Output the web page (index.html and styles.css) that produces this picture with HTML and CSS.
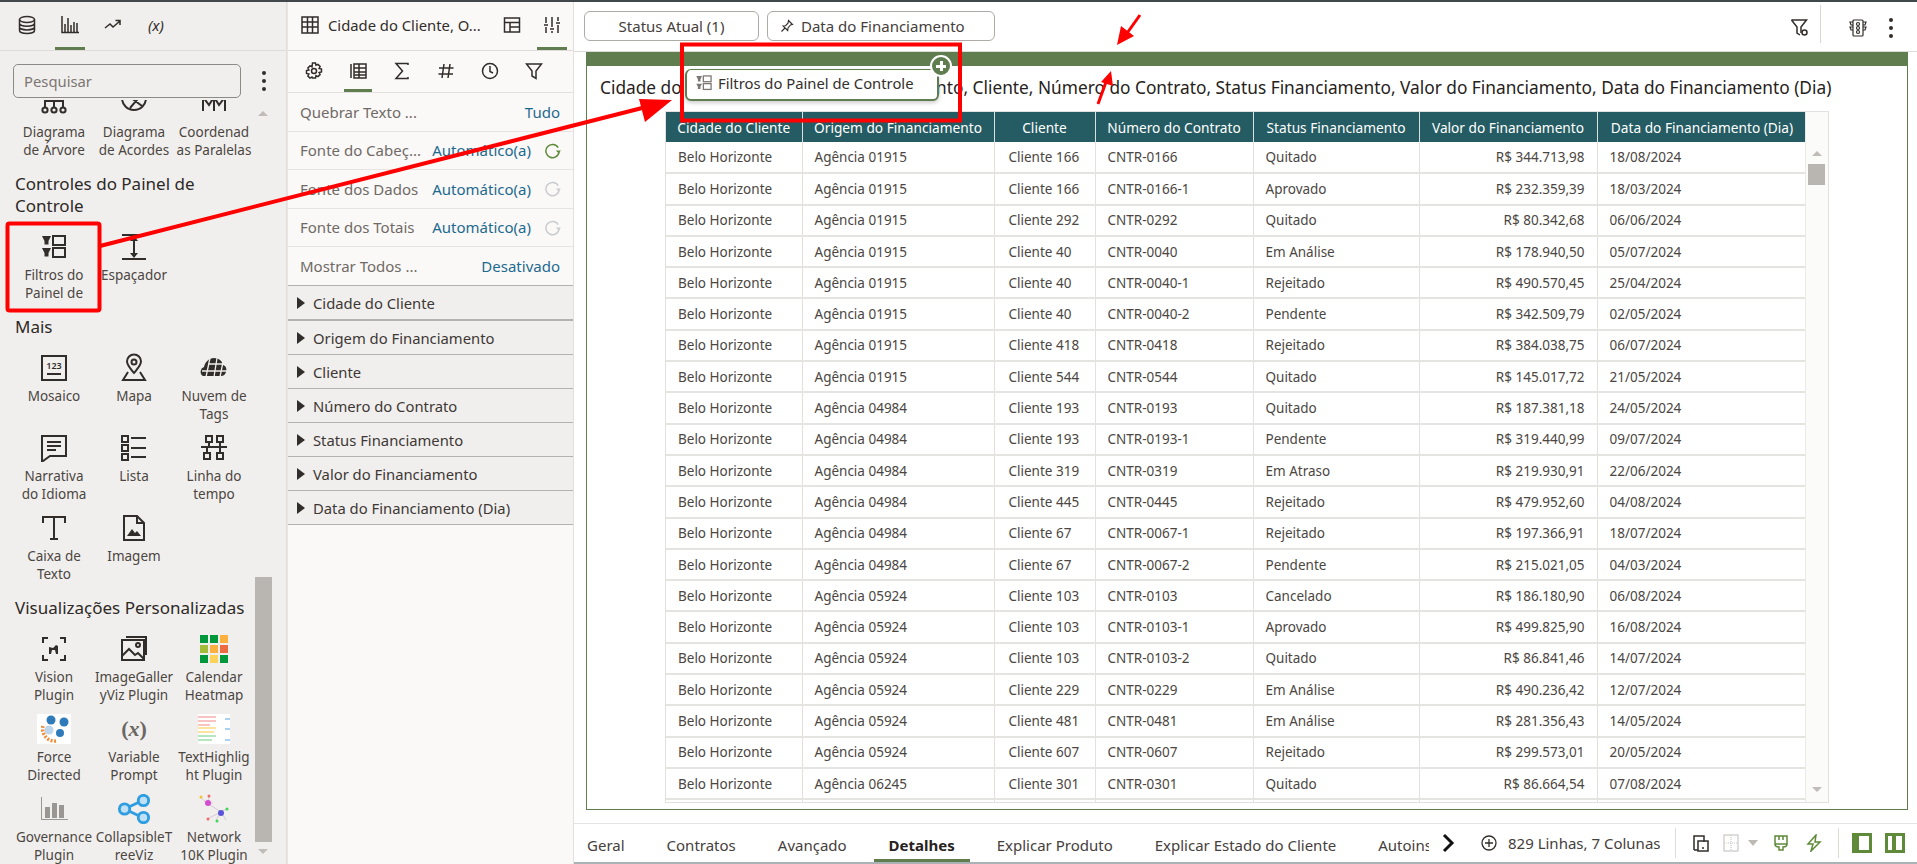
FILE: index.html
```html
<!DOCTYPE html>
<html lang="pt">
<head>
<meta charset="utf-8">
<title>Detalhes</title>
<link rel="stylesheet" href="styles.css">
</head>
<body>
<div class="topstrip"></div>
<div class="app">
  <aside class="palette">
    <nav class="ptabs">
      <span class="ptab"><svg class="ic20" viewBox="0 0 20 20"><ellipse cx="10" cy="4.5" rx="7.5" ry="3"/><path d="M2.5 4.500v11c0 1.700 3.400 3 7.500 3s7.500-1.300 7.500-3v-11M2.500 8.200c0 1.700 3.400 3 7.500 3s7.500-1.300 7.500-3M2.500 11.900c0 1.700 3.400 3 7.500 3s7.500-1.300 7.500-3"/></svg></span>
      <span class="ptab active"><svg class="ic20" viewBox="0 0 20 20"><path d="M2 1v16.500h17M5 17V9M8 17V3M11 17V10M14 17V7M17 17V8"/></svg></span>
      <span class="ptab"><svg class="ic20" viewBox="0 0 20 20"><path d="M2 13l5-4 3 3 7-6M12.500 5.500H17V10"/></svg></span>
      <span class="ptab ptab-x">(x)</span>
    </nav>
    <div class="searchrow">
      <div class="search">Pesquisar</div>
      <span class="kebab"><i></i><i></i><i></i></span>
    </div>
    <div class="scroller">
      <div class="tiles tiles-first">
        <div class="tile"><svg class="ic28" viewBox="0 0 28 28"><path d="M14 2v7M5 17v-6h18v6M14 9v8"/><circle cx="5" cy="20" r="2.600"/><circle cx="14" cy="20" r="2.600"/><circle cx="23" cy="20" r="2.600"/></svg><span>Diagrama<br>de Árvore</span></div>
        <div class="tile"><svg class="ic28" viewBox="0 0 28 28"><path d="M2 8a12 12 0 0 0 24 0M6 4l16 12M22 4L10 18"/></svg><span>Diagrama<br>de Acordes</span></div>
        <div class="tile"><svg class="ic28" viewBox="0 0 28 28"><path d="M3 2v19M25 2v19M14 2v19M3 7l6 8 5-8 5 8 6-8"/></svg><span>Coordenad<br>as Paralelas</span></div>
      </div>
      <h3>Controles do Painel de<br>Controle</h3>
      <div class="tiles tiles-ctrl">
        <div class="tile"><svg class="ic28" viewBox="0 0 28 28"><path class="fill" d="M2 3h9L8.500 8v3.500h-4V8zM2 15h9l-2.500 5v3.500h-4V20z"/><rect x="13" y="3" width="12" height="9"/><rect x="13" y="15" width="12" height="9"/></svg><span>Filtros do<br>Painel de</span></div>
        <div class="tile"><svg class="ic28" viewBox="0 0 28 28"><path d="M2 2h24M2 26h24M14 6v16"/><path class="fill" d="M14 3l4 5h-8zM14 25l4-5h-8z"/></svg><span>Espaçador</span></div>
      </div>
      <h3>Mais</h3>
      <div class="tiles">
        <div class="tile"><svg class="ic28" viewBox="0 0 28 28"><rect x="2" y="2" width="24" height="24"/><path d="M7 20h14"/><text x="14" y="15" class="mini">123</text></svg><span>Mosaico</span></div>
        <div class="tile"><svg class="ic28" viewBox="0 0 28 28"><path d="M14 19c-4-5-7-8-7-11.500a7 7 0 0 1 14 0C21 11 18 14 14 19zM8 18l-5 8h22l-5-8"/><circle cx="14" cy="8" r="2.500"/></svg><span>Mapa</span></div>
        <div class="tile"><svg class="ic28" viewBox="0 0 28 28"><path class="fill" d="M3 22a5 5 0 0 1 1-9c1-5 5-9 10-9 5 0 8 3 9 7 3 1 4 4 3 7-1 3-3 4-5 4z"/><path class="white" d="M2 17h25M8 10h18M10 4l-4 19M17 4l-3 19M23 8l-3 15"/></svg><span>Nuvem de<br>Tags</span></div>
        <div class="tile"><svg class="ic28" viewBox="0 0 28 28"><path d="M2 2h24v20H10l-7 5-1 0zM7 8h14M7 12h14M7 16h9"/></svg><span>Narrativa<br>do Idioma</span></div>
        <div class="tile"><svg class="ic28" viewBox="0 0 28 28"><rect x="2" y="2" width="6" height="6"/><rect x="2" y="11" width="6" height="6"/><rect x="2" y="20" width="6" height="6"/><path d="M11 4h15M11 14h15M11 23h15"/></svg><span>Lista</span></div>
        <div class="tile"><svg class="ic28" viewBox="0 0 28 28"><rect x="6" y="2" width="6" height="6"/><rect x="17" y="2" width="6" height="6"/><rect x="4" y="19" width="6" height="6"/><rect x="17" y="19" width="6" height="6"/><path d="M9 8v5M20 8v5M1 13h26M7 13v6M20 13v6"/></svg><span>Linha do<br>tempo</span></div>
        <div class="tile"><svg class="ic28" viewBox="0 0 28 28"><path d="M14 3v22M10 25h8M3 9V3h22v6"/></svg><span>Caixa de<br>Texto</span></div>
        <div class="tile"><svg class="ic28" viewBox="0 0 28 28"><path d="M4 2h13l7 7v17H4zM17 2v7h7"/><path class="fill" d="M7 22l5-7 3 4 2-2 4 5z"/></svg><span>Imagem</span></div>
      </div>
      <h3>Visualizações Personalizadas</h3>
      <div class="tiles">
        <div class="tile"><svg class="ic28" viewBox="0 0 28 28"><path d="M8 3H3v5M20 3h5v5M8 25H3v-5M20 25h5v-5"/><path class="fill" d="M9 12l4 1 3-3 2 1v8h-2l-1-4h-3l-1 4H9z"/></svg><span>Vision<br>Plugin</span></div>
        <div class="tile"><svg class="ic28" viewBox="0 0 28 28"><path class="thin" d="M6 2h20v18"/><rect class="thin" x="2" y="5" width="22" height="20"/><path class="thin" d="M2 21l7-7 6 6 3-2 6 6"/><circle class="thin" cx="18" cy="10" r="2"/></svg><span>ImageGaller<br>yViz Plugin</span></div>
        <div class="tile"><svg class="ic28 plain" viewBox="0 0 28 28"><rect class="g1" width="8" height="8"/><rect class="g1" x="10" width="8" height="8"/><rect class="c2" x="20" width="8" height="8"/><rect class="c3" y="10" width="8" height="8"/><rect class="c2" x="10" y="10" width="8" height="8"/><rect class="c4" x="20" y="10" width="8" height="8"/><rect class="g1" y="20" width="8" height="8"/><rect class="c5" x="10" y="20" width="8" height="8"/><rect class="g1" x="20" y="20" width="8" height="8"/></svg><span>Calendar<br>Heatmap</span></div>
        <div class="tile"><svg class="ic34 plain" viewBox="0 0 34 30"><rect class="w" width="34" height="30"/><circle class="b1" cx="14" cy="6" r="4.500"/><circle class="b1" cx="27" cy="8" r="4.500"/><circle class="b1" cx="23" cy="19" r="4"/><circle class="b2" cx="12" cy="16" r="4.500"/><path class="o1" d="M6 12a12 12 0 0 0 2 10 12 12 0 0 0 11 5"/></svg><span>Force<br>Directed</span></div>
        <div class="tile"><b class="var">(<i>x</i>)</b><span>Variable<br>Prompt</span></div>
        <div class="tile"><svg class="ic34 plain" viewBox="0 0 32 30"><rect class="w" width="32" height="30"/><rect class="pk" y="2" width="18" height="2"/><rect class="pk" y="6" width="18" height="2"/><rect class="pk" y="10" width="12" height="2"/><rect class="ye" y="13" width="18" height="2"/><rect class="ye" y="17" width="16" height="2"/><rect class="gr" y="21" width="18" height="2"/><rect class="gr" y="25" width="14" height="2"/><rect class="bl" x="27" y="4" width="5" height="2"/><rect class="bl" x="27" y="14" width="5" height="2"/><rect class="bl" x="27" y="25" width="5" height="2"/></svg><span>TextHighlig<br>ht Plugin</span></div>
        <div class="tile"><svg class="ic28 plain" viewBox="0 0 28 28"><path class="gy" d="M1 2v23h27v-1H2V2zM5 12h5v11H5zM12 8h5v15h-5zM19 10h5v13h-5z"/></svg><span>Governance<br>Plugin</span></div>
        <div class="tile"><svg class="ic34 plain" viewBox="0 0 36 30"><path class="bs" d="M8 15L27 6M8 15l19 9"/><circle class="bc" cx="8" cy="15" r="5.500"/><circle class="bc" cx="28" cy="6" r="5.500"/><circle class="bc" cx="28" cy="24" r="5.500"/></svg><span>CollapsibleT<br>reeViz</span></div>
        <div class="tile"><svg class="ic34 plain" viewBox="0 0 30 30"><path class="nl" d="M8 9l14 9M8 9l2-6M8 9L1 3M8 9l6 0M22 18l7-4M22 18l5 8M22 18l-5 8M22 18l-14 7"/><circle class="nm" cx="9" cy="9" r="3"/><circle class="nb" cx="22" cy="19" r="3"/><circle class="ny" cx="2" cy="3" r="1.500"/><circle class="nr" cx="10" cy="2" r="1.500"/><circle class="ng" cx="28" cy="15" r="1.500"/><circle class="ng" cx="18" cy="27" r="1.500"/><circle class="nr" cx="9" cy="25" r="1.500"/></svg><span>Network<br>10K Plugin</span></div>
      </div>
      <span class="sb-up"></span>
      <span class="sb-thumb"></span>
      <span class="sb-down"></span>
    </div>
  </aside>

  <section class="props">
    <header class="props-head">
      <svg class="ic18" viewBox="0 0 18 18"><rect x="1" y="1" width="16" height="16"/><path d="M1 6h16M1 11h16M6.500 1v16M11.500 1v16"/></svg>
      <span class="props-title">Cidade do Cliente, O...</span>
      <svg class="ic18 hd-a" viewBox="0 0 18 18"><rect x="1.500" y="2" width="15" height="14"/><path d="M1.500 6.500h15M7 6.500V16M7 11h9.500"/></svg>
      <span class="hd-b"><svg class="ic18" viewBox="0 0 18 18"><path d="M3 1v6M3 11v6M9 1v10M9 15v2M15 1v4M15 9v8M1 9h4M7 13h4M13 7h4"/></svg></span>
    </header>
    <nav class="subtabs">
      <svg class="ic18" viewBox="0 0 18 18"><circle cx="9" cy="9" r="2.500"/><path d="M7.500 1h3l.5 2.300 2-.9 2.100 2.100-1 2 2.400.5v3l-2.400.5 1 2-2.100 2.100-2-1-.5 2.400h-3L7 15.100l-2 1-2.100-2.100 1-2L1.500 11.500v-3l2.400-.5-1-2L5 3.900l2 .9z"/></svg>
      <span class="sub-active"><svg class="ic18" viewBox="0 0 18 18"><path d="M2 2v14M5 2h12v14H5zM5 6h12M5 10h12M5 13h12M10 2v14"/></svg></span>
      <svg class="ic18" viewBox="0 0 18 18"><path d="M15 3V1.500H3L9.500 9 3 16.500h12V15"/></svg>
      <svg class="ic18" viewBox="0 0 18 18"><path d="M7 2L5 16M13 2l-2 14M2 6h14.500M1.500 12H16"/></svg>
      <svg class="ic18" viewBox="0 0 18 18"><circle cx="9" cy="9" r="7.500"/><path d="M9 4v5.500l3 1.500"/></svg>
      <svg class="ic18" viewBox="0 0 18 18"><path d="M1.500 2h15L11 9v7.500L7 14V9z"/></svg>
    </nav>
    <div class="prop"><span class="k">Quebrar Texto ...</span><span class="v">Tudo</span></div>
    <div class="prop"><span class="k">Fonte do Cabeç...</span><span class="v v-auto">Automático(a)</span><svg class="reset on" viewBox="0 0 18 18"><path d="M15 6A7 7 0 1 0 16 10"/><path class="tip" d="M12.500 9h5.500l-2.700 3z"/></svg></div>
    <div class="prop"><span class="k">Fonte dos Dados</span><span class="v v-auto">Automático(a)</span><svg class="reset" viewBox="0 0 18 18"><path d="M15 6A7 7 0 1 0 16 10"/><path class="tip" d="M12.500 9h5.500l-2.700 3z"/></svg></div>
    <div class="prop"><span class="k">Fonte dos Totais</span><span class="v v-auto">Automático(a)</span><svg class="reset" viewBox="0 0 18 18"><path d="M15 6A7 7 0 1 0 16 10"/><path class="tip" d="M12.500 9h5.500l-2.700 3z"/></svg></div>
    <div class="prop prop-last"><span class="k">Mostrar Todos ...</span><span class="v">Desativado</span></div>
    <div class="acc acc-first">Cidade do Cliente</div>
    <div class="acc">Origem do Financiamento</div>
    <div class="acc">Cliente</div>
    <div class="acc">Número do Contrato</div>
    <div class="acc">Status Financiamento</div>
    <div class="acc">Valor do Financiamento</div>
    <div class="acc">Data do Financiamento (Dia)</div>
  </section>

  <main class="main">
    <div class="filterbar">
      <button class="pill pill-a">Status Atual (1)</button>
      <button class="pill pill-b"><svg class="ic14" viewBox="0 0 14 14"><path d="M8.500 1.500l4 4-2 .5-2.500 3-.3 2.500L3 7l2.500-.3 2.500-2.500zM5 9l-3.500 3.500"/></svg>Data do Financiamento</button>
      <svg class="ic20 fb-filter" viewBox="0 0 20 20"><path d="M1.500 2h15L11 9v6"/><path d="M1.500 2L7 9v6l3 2"/><circle cx="14.500" cy="14.500" r="2.500"/></svg>
      <span class="fb-sep"></span>
      <svg class="ic20 fb-light" viewBox="0 0 20 20"><rect x="5" y="2" width="10" height="16" rx="1"/><circle cx="10" cy="6" r="1.500"/><circle cx="10" cy="10" r="1.500"/><circle cx="10" cy="14" r="1.500"/><path d="M5 4H2l1 3h2M15 4h3l-1 3h-2M5 9H2l1 3h2M15 9h3l-1 3h-2"/></svg>
      <span class="kebab kebab-fb"><i></i><i></i><i></i></span>
    </div>
    <div class="canvas">
      <div class="frame">
        <h2 class="viz-title">Cidade do Cliente, Origem do Financiamento, Cliente, Número do Contrato, Status Financiamento, Valor do Financiamento, Data do Financiamento (Dia)</h2>
        <div class="gridwrap">
          <table class="grid">
            <colgroup><col class="c1"><col class="c2w"><col class="c3w"><col class="c4w"><col class="c5w"><col class="c6w"><col class="c7w"></colgroup>
            <thead><tr><th>Cidade do Cliente</th><th>Origem do Financiamento</th><th>Cliente</th><th>Número do Contrato</th><th>Status Financiamento</th><th>Valor do Financiamento</th><th>Data do Financiamento (Dia)</th></tr></thead>
            <tbody>
              <tr><td>Belo Horizonte</td><td>Agência 01915</td><td>Cliente 166</td><td>CNTR-0166</td><td>Quitado</td><td class="num">R$ 344.713,98</td><td>18/08/2024</td></tr>
              <tr><td>Belo Horizonte</td><td>Agência 01915</td><td>Cliente 166</td><td>CNTR-0166-1</td><td>Aprovado</td><td class="num">R$ 232.359,39</td><td>18/03/2024</td></tr>
              <tr><td>Belo Horizonte</td><td>Agência 01915</td><td>Cliente 292</td><td>CNTR-0292</td><td>Quitado</td><td class="num">R$ 80.342,68</td><td>06/06/2024</td></tr>
              <tr><td>Belo Horizonte</td><td>Agência 01915</td><td>Cliente 40</td><td>CNTR-0040</td><td>Em Análise</td><td class="num">R$ 178.940,50</td><td>05/07/2024</td></tr>
              <tr><td>Belo Horizonte</td><td>Agência 01915</td><td>Cliente 40</td><td>CNTR-0040-1</td><td>Rejeitado</td><td class="num">R$ 490.570,45</td><td>25/04/2024</td></tr>
              <tr><td>Belo Horizonte</td><td>Agência 01915</td><td>Cliente 40</td><td>CNTR-0040-2</td><td>Pendente</td><td class="num">R$ 342.509,79</td><td>02/05/2024</td></tr>
              <tr><td>Belo Horizonte</td><td>Agência 01915</td><td>Cliente 418</td><td>CNTR-0418</td><td>Rejeitado</td><td class="num">R$ 384.038,75</td><td>06/07/2024</td></tr>
              <tr><td>Belo Horizonte</td><td>Agência 01915</td><td>Cliente 544</td><td>CNTR-0544</td><td>Quitado</td><td class="num">R$ 145.017,72</td><td>21/05/2024</td></tr>
              <tr><td>Belo Horizonte</td><td>Agência 04984</td><td>Cliente 193</td><td>CNTR-0193</td><td>Quitado</td><td class="num">R$ 187.381,18</td><td>24/05/2024</td></tr>
              <tr><td>Belo Horizonte</td><td>Agência 04984</td><td>Cliente 193</td><td>CNTR-0193-1</td><td>Pendente</td><td class="num">R$ 319.440,99</td><td>09/07/2024</td></tr>
              <tr><td>Belo Horizonte</td><td>Agência 04984</td><td>Cliente 319</td><td>CNTR-0319</td><td>Em Atraso</td><td class="num">R$ 219.930,91</td><td>22/06/2024</td></tr>
              <tr><td>Belo Horizonte</td><td>Agência 04984</td><td>Cliente 445</td><td>CNTR-0445</td><td>Rejeitado</td><td class="num">R$ 479.952,60</td><td>04/08/2024</td></tr>
              <tr><td>Belo Horizonte</td><td>Agência 04984</td><td>Cliente 67</td><td>CNTR-0067-1</td><td>Rejeitado</td><td class="num">R$ 197.366,91</td><td>18/07/2024</td></tr>
              <tr><td>Belo Horizonte</td><td>Agência 04984</td><td>Cliente 67</td><td>CNTR-0067-2</td><td>Pendente</td><td class="num">R$ 215.021,05</td><td>04/03/2024</td></tr>
              <tr><td>Belo Horizonte</td><td>Agência 05924</td><td>Cliente 103</td><td>CNTR-0103</td><td>Cancelado</td><td class="num">R$ 186.180,90</td><td>06/08/2024</td></tr>
              <tr><td>Belo Horizonte</td><td>Agência 05924</td><td>Cliente 103</td><td>CNTR-0103-1</td><td>Aprovado</td><td class="num">R$ 499.825,90</td><td>16/08/2024</td></tr>
              <tr><td>Belo Horizonte</td><td>Agência 05924</td><td>Cliente 103</td><td>CNTR-0103-2</td><td>Quitado</td><td class="num">R$ 86.841,46</td><td>14/07/2024</td></tr>
              <tr><td>Belo Horizonte</td><td>Agência 05924</td><td>Cliente 229</td><td>CNTR-0229</td><td>Em Análise</td><td class="num">R$ 490.236,42</td><td>12/07/2024</td></tr>
              <tr><td>Belo Horizonte</td><td>Agência 05924</td><td>Cliente 481</td><td>CNTR-0481</td><td>Em Análise</td><td class="num">R$ 281.356,43</td><td>14/05/2024</td></tr>
              <tr><td>Belo Horizonte</td><td>Agência 05924</td><td>Cliente 607</td><td>CNTR-0607</td><td>Rejeitado</td><td class="num">R$ 299.573,01</td><td>20/05/2024</td></tr>
              <tr><td>Belo Horizonte</td><td>Agência 06245</td><td>Cliente 301</td><td>CNTR-0301</td><td>Quitado</td><td class="num">R$ 86.664,54</td><td>07/08/2024</td></tr>
              <tr class="stub"><td></td><td></td><td></td><td></td><td></td><td></td><td></td></tr>
            </tbody>
          </table>
          <div class="vscroll"><span class="sb-up2"></span><span class="thumb2"></span><span class="sb-down2"></span></div>
        </div>
      </div>
    </div>
    <footer class="tabsbar">
      <div class="tablist">
        <span class="tab">Geral</span>
        <span class="tab">Contratos</span>
        <span class="tab">Avançado</span>
        <span class="tab t-det">Detalhes</span>
        <span class="tab">Explicar Produto</span>
        <span class="tab">Explicar Estado do Cliente</span>
        <span class="tab t-auto">Autoins</span>
      </div>
      <svg class="chev" viewBox="0 0 14 20"><path d="M3 2l8 8-8 8"/></svg>
      <svg class="ic16 addtab" viewBox="0 0 16 16"><circle cx="8" cy="8" r="7"/><path d="M8 4v8M4 8h8"/></svg>
      <span class="rowcount">829 Linhas, 7 Colunas</span>
      <span class="tb-sep"></span>
      <svg class="ic18" viewBox="0 0 18 18"><path d="M2 16V2h10v6"/><path d="M2 16h4"/><rect x="6" y="7" width="10" height="10"/><path d="M10 14h2"/></svg>
      <svg class="ic18 faded" viewBox="0 0 18 18"><rect x="2" y="1" width="14" height="16"/><path class="dots" d="M9 1v16M2 9h14"/></svg>
      <span class="caret"></span>
      <svg class="ic18 gr" viewBox="0 0 18 18"><path d="M3 2h12v8H3zM3 10c0 2 2 3 4 3v3h4v-3c2 0 4-1 4-3M7 2v4M11 2v4"/></svg>
      <svg class="ic18 gr bolt" viewBox="0 0 18 18"><path d="M11 1L3 10h5l-2 7 9-9h-5z"/></svg>
      <span class="tb-sep tb-sep2"></span>
      <span class="panel-btn pb-l"></span>
      <span class="panel-btn pb-r"></span>
    </footer>
  </main>
</div>

<div class="dragcard">
  <svg class="ic18 dimmed" viewBox="0 0 28 28"><path class="fill" d="M2 3h9L8.500 8v3.500h-4V8zM2 15h9l-2.500 5v3.500h-4V20z"/><rect x="13" y="3" width="12" height="9"/><rect x="13" y="15" width="12" height="9"/></svg>
  Filtros do Painel de Controle
  <span class="dragplus"></span>
</div>

<svg class="annot" viewBox="0 0 1917 864">
  <rect x="7.500" y="223.500" width="92" height="87" rx="2"/>
  <rect x="682" y="44.500" width="278" height="76"/>
  <path d="M100 246L650 106"/>
  <path class="head" d="M672 100L645 122 639 99z"/>
  <path class="tin" d="M1140 15L1125 36"/>
  <path class="head" d="M1117 45L1121 26 1134 36z"/>
  <path class="tin" d="M1098 104L1106 82"/>
  <path class="head" d="M1111 71L1113 86 1101 82z"/>
</svg>
</body>
</html>
```
FILE: styles.css
```css
* { box-sizing: border-box; }
html, body { margin: 0; height: 100%; }
body { width: 1917px; height: 864px; overflow: hidden; position: relative; font-family: "Noto Sans", "Open Sans", sans-serif; color: #3b3633; background: #fff; }
svg { fill: none; stroke: #312d2a; stroke-width: 1.6; display: block; flex: none; }
svg .fill { fill: #312d2a; stroke: none; }
svg .white { stroke: #f1efed; stroke-width: 1.3; fill: none; }
svg.plain { stroke: none; }
.ic14 { width: 14px; height: 14px; stroke-width: 1.1; }
.ic16 { width: 16px; height: 16px; }
.ic18 { width: 18px; height: 18px; stroke-width: 1.5; }
.ic20 { width: 20px; height: 20px; stroke-width: 1.5; }
.ic28 { width: 28px; height: 28px; stroke-width: 2; }
.ic34 { width: 34px; height: 30px; }

.topstrip { height: 2px; background: #41484b; }
.app { display: flex; height: 862px; }

/* Palette */
.palette { width: 287px; flex: none; background: #f1efed; border-right: 1px solid #e2dfdc; display: flex; flex-direction: column; }
.ptabs { height: 49px; display: flex; padding-left: 12px; gap: 13px; border-bottom: 1px solid #dedbd8; flex: none; }
.ptab { width: 30px; height: 48px; display: flex; align-items: center; justify-content: center; padding-bottom: 3px; }
.ptab.active { box-shadow: inset 0 -3px 0 #5f7d4f; }
.ptab-x { font-style: italic; font-size: 15px; color: #312d2a; }
.searchrow { height: 49px; display: flex; align-items: flex-start; padding: 13px 0 0 13px; flex: none; }
.search { width: 228px; height: 34px; border: 1px solid #8d8985; border-radius: 5px; background: #f1efed; font-size: 14.800px; color: #7b7672; line-height: 32px; padding-left: 10px; }
.kebab { display: flex; flex-direction: column; gap: 4px; margin: 7px 0 0 21px; }
.kebab i { width: 4px; height: 4px; border-radius: 50%; background: #312d2a; display: block; }
.scroller { position: relative; flex: 1; overflow: hidden; padding-left: 14px; width: 286px; }
.scroller h3 { margin: 0 0 0 1px; padding: 10px 0 9px; font-size: 17px; line-height: 22px; font-weight: 400; color: #2d2926; white-space: nowrap; }
.tiles { display: grid; grid-template-columns: repeat(3, 80px); grid-auto-rows: 80px; }
.tiles-first { margin-top: -17px; }
.tile { display: flex; flex-direction: column; align-items: center; padding-top: 6px; font-size: 13.500px; line-height: 17.500px; color: #4b4642; text-align: center; }
.tile > svg, .tile > .var { height: 30px; margin-bottom: 4px; }
.tile > span { display: block; margin-top: 1px; white-space: nowrap; }
.var { font-family: "Liberation Serif", serif; font-size: 22px; font-weight: 700; line-height: 30px; color: #6b6763; }
.sb-up, .sb-down, .sb-up2, .sb-down2 { position: absolute; width: 0; height: 0; border-left: 5px solid transparent; border-right: 5px solid transparent; }
.sb-up { top: 11px; left: 258px; border-bottom: 5px solid #c1bcb7; }
.sb-down { bottom: 10px; left: 258px; border-top: 5px solid #c1bcb7; }
.sb-thumb { position: absolute; top: 477px; left: 255px; width: 17px; height: 265px; background: #b9b5b1; }
.g1 { fill: #00983a; } .c2 { fill: #fbb040; } .c3 { fill: #a3bc37; } .c4 { fill: #ee6a43; } .c5 { fill: #fdd25a; }
.w { fill: #fff; } .b1 { fill: #2f7ab9; } .b2 { fill: #bcd6ee; }
.o1 { stroke: #f18d3c; stroke-width: 3.500; stroke-dasharray: 2 1.500; fill: none; }
.pk { fill: #f8c3c3; } .ye { fill: #fde3a0; } .gr { fill: #b6e6bf; } .bl { fill: #a9d2f2; }
.gy { fill: #9a9693; }
.bs { stroke: #2f9ee0; stroke-width: 3; }
.bc { fill: #bfe0f7; stroke: #2f9ee0; stroke-width: 3; }
.nl { stroke: #d4c9d6; stroke-width: 1; }
.nm { fill: #d64ccf; } .nb { fill: #5a55d8; } .ny { fill: #f1c232; } .nr { fill: #ef6a6a; } .ng { fill: #3ed65a; }
.mini { font-family: "Noto Sans", sans-serif; font-size: 9px; fill: #312d2a; stroke: none; text-anchor: middle; font-weight: 600; }

/* Props */
.props { width: 287px; flex: none; background: #fbf9f8; border-right: 1px solid #e2dfdc; border-left: 1px solid #e8e6e3; }
.props-head { height: 49px; display: flex; align-items: center; padding: 0 0 3px 13px; border-bottom: 1px solid #dedbd8; font-size: 14.800px; color: #312d2a; position: relative; }
.props-title { margin-left: 9px; width: 175px; white-space: nowrap; }
.hd-b { position: absolute; left: 249px; top: 0; width: 30px; height: 48px; display: flex; align-items: center; justify-content: center; padding-bottom: 3px; box-shadow: inset 0 -3px 0 #5f7d4f; }
.subtabs { height: 42px; display: flex; align-items: center; padding: 0 0 2px 17px; gap: 26px; border-bottom: 1px solid #e2dfdc; position: relative; }
.sub-active { position: relative; height: 41px; display: flex; align-items: center; }
.sub-active::after { content: ""; position: absolute; left: -5px; right: -5px; bottom: -1px; height: 3px; background: #5f7d4f; }
.prop { height: 38.500px; border-bottom: 1px solid #e6e3e0; display: flex; align-items: center; padding: 0 13px 0 12px; font-size: 15px; white-space: nowrap; }
.prop .k { color: #6f6a66; flex: 1; }
.prop .v { color: #1d6a8f; }
.prop .v-auto { margin-right: 13px; }
.prop-last { border-bottom: 1px solid #b5b1ad; }
.reset { width: 17px; height: 17px; stroke: #c9cccf; stroke-width: 1.600; margin-right: -1px; }
.reset .tip { fill: #c9cccf; stroke: none; }
.reset.on { stroke: #5f8a3a; }
.reset.on .tip { fill: #5f8a3a; }
.acc { height: 34px; background: #f1efed; border-bottom: 1px solid #b5b1ad; font-size: 14.800px; line-height: 34px; color: #3d3835; padding-left: 25px; position: relative; }
.acc::before { content: ""; position: absolute; left: 9px; top: 11px; border-left: 8px solid #312d2a; border-top: 6px solid transparent; border-bottom: 6px solid transparent; }
.acc-first { height: 35px; border-bottom-width: 2px; }

/* Main */
.main { flex: 1; min-width: 0; display: flex; flex-direction: column; }
.filterbar { height: 50px; flex: none; display: flex; align-items: flex-start; padding: 9px 0 0 10px; border-bottom: 1px solid #dedbd8; position: relative; }
.pill { height: 30px; border: 1px solid #aeaaa6; border-radius: 6px; background: #fff; font: 15px "Noto Sans", sans-serif; color: #45403c; display: flex; align-items: center; justify-content: center; padding: 0; }
.pill-a { width: 175px; }
.pill-b { width: 228px; margin-left: 8px; justify-content: flex-start; padding-left: 12px; gap: 7px; }
.fb-filter { position: absolute; left: 1216px; top: 16px; width: 20px; height: 20px; }
.fb-sep { position: absolute; left: 1246px; top: 3px; width: 1px; height: 38px; background: #d9d6d3; }
.fb-light { position: absolute; left: 1274px; top: 16px; stroke-width: 1.200; }
.kebab-fb { position: absolute; left: 1315px; top: 10px; margin: 6px 0 0; }
.canvas { flex: 1; min-height: 0; padding: 0 9px 13px 12px; background: #fff; }
.frame { height: 100%; border: 1px solid #5f7d4f; border-top: 14px solid #5f7d4f; }
.viz-title { margin: 0; height: 45px; padding-left: 13px; font-size: 17.300px; line-height: 44px; font-weight: 400; color: #262220; white-space: nowrap; }
.gridwrap { margin-left: 78px; width: 1164px; height: 692px; border: 1px solid #e3e1de; position: relative; overflow: hidden; }
.grid { border-collapse: collapse; table-layout: fixed; width: 1141px; font-size: 13.500px; color: #4b4642; }
.c1 { width: 136px; } .c2w { width: 192px; } .c3w { width: 101px; } .c4w { width: 158px; } .c5w { width: 166px; } .c6w { width: 178px; } .c7w { width: 210px; }
.grid th { height: 30px; padding: 0 4px; background: #255c63; color: #fff; font-weight: 400; font-size: 13.700px; border-right: 1px solid #d9e2e3; white-space: nowrap; text-align: center; }
.grid td { height: 31.300px; padding: 0 12px; border-right: 1px solid #e3e1de; border-bottom: 2px solid #e6e4e1; white-space: nowrap; }
.grid td:nth-child(3) { padding-left: 14px; }
.grid td.num { text-align: right; }
.grid .stub td { height: 8px; }
.vscroll { position: absolute; right: 0; top: 0; bottom: 0; width: 23px; background: #fbfbfa; border-left: 1px solid #eceae8; }
.sb-up2 { top: 39px; left: 6px; border-bottom: 5px solid #c1bcb7; }
.sb-down2 { bottom: 10px; left: 6px; border-top: 5px solid #c1bcb7; }
.thumb2 { position: absolute; top: 52px; left: 2px; width: 17px; height: 21px; background: #b9b5b1; }

/* Tabs */
.tabsbar { height: 41px; flex: none; border-top: 1px solid #e6e3e0; border-bottom: 2px solid #aab2b5; display: flex; align-items: center; font-size: 15px; color: #45403c; position: relative; }
.tablist { width: 856px; flex: none; height: 38px; padding-left: 13px; display: flex; gap: 42px; overflow: hidden; }
.tab { line-height: 43px; white-space: nowrap; }
.t-det { font-weight: 700; color: #262220; position: relative; }
.t-det::after { content: ""; position: absolute; left: -15px; right: -15px; bottom: 0; height: 3px; background: #5f7d4f; }
.t-auto { width: 51px; overflow: hidden; }
.chev { width: 14px; height: 20px; stroke: #111; stroke-width: 3; margin-left: 11px; }
.addtab { margin-left: 26px; stroke-width: 1.300; }
.rowcount { margin-left: 11px; width: 167px; white-space: nowrap; }
.tb-sep { width: 1px; height: 30px; background: #dedbd8; }
.tb-sep + svg { margin-left: 16px; }
.faded { margin-left: 12px; stroke: #c9c7c4; stroke-width: 1.200; }
.dots { stroke-dasharray: 1 1; }
.caret { margin-left: 8px; border-top: 6px solid #bdb9b5; border-left: 5px solid transparent; border-right: 5px solid transparent; }
svg.gr { stroke: #5f8a3a; margin-left: 14px; fill: none; }
.bolt { margin-left: 15px !important; }
.tb-sep2 { margin-left: 15px; }
.panel-btn { width: 20px; height: 20px; border: 3px solid #5f8a3a; background: #fff; }
.pb-l { border-left-width: 7px; margin-left: 13px; }
.pb-r { margin-left: 13px; position: relative; }
.pb-r::after { content: ""; position: absolute; left: 4px; top: 0; bottom: 0; width: 4px; background: #5f8a3a; }

/* Overlays */
.dragcard { position: absolute; left: 685px; top: 69px; width: 254px; height: 32px; background: #fff; border: 2px solid #5f7d4f; border-top-width: 1px; border-radius: 6px; display: flex; align-items: center; font-size: 14.800px; color: #33302d; padding: 0 0 3px 8px; gap: 5px; box-shadow: 0 2px 4px rgba(0,0,0,.2); }
.dimmed { stroke: #7d7874; stroke-width: 2; }
.dimmed .fill { fill: #7d7874; }
.dragplus { position: absolute; right: -15px; top: -15px; width: 22px; height: 22px; border-radius: 50%; background: #5f7d4f; border: 2px solid #fff; }
.dragplus::before { content: ""; position: absolute; left: 4px; top: 7.500px; width: 10px; height: 3px; background: #fff; }
.dragplus::after { content: ""; position: absolute; left: 7.500px; top: 4px; width: 3px; height: 10px; background: #fff; }
.annot { position: absolute; left: 0; top: 0; width: 1917px; height: 864px; pointer-events: none; stroke: #f00; stroke-width: 4; }
.annot .head { fill: #f00; stroke: none; }
.annot .tin { stroke-width: 3; }
```
